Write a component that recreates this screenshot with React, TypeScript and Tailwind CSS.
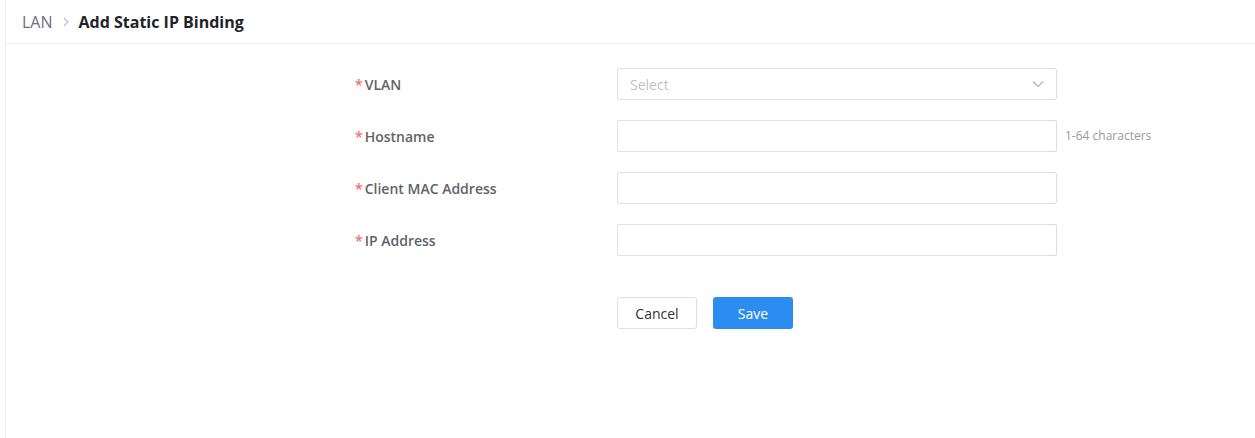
import React from "react";

const font = { fontFamily: '"Open Sans", "Noto Sans", Arial, sans-serif' };

function Label({ text }: { text: string }) {
  return (
    <div className="w-[262px] flex items-center text-[14px] font-semibold text-[#5f6368]">
      <span className="text-[#f56c6c] mr-[2px] text-[14px]">*</span>
      {text}
    </div>
  );
}

function Row({ label, children, hint }: { label: string; children: React.ReactNode; hint?: string }) {
  return (
    <div className="flex items-center h-[32px]">
      <Label text={label} />
      {children}
      {hint && <span className="ml-[8px] text-[12px] text-[#999]">{hint}</span>}
    </div>
  );
}

function TextBox() {
  return <div className="w-[440px] h-[32px] border border-[#dcdfe6] rounded-[2px] bg-white" />;
}

export default function App() {
  return (
    <div className="w-[1255px] h-[438px] bg-white pl-[5px]" style={font}>
      <div className="h-full border-l border-[#ebeef5] flex flex-col">
        <div className="h-[44px] border-b border-[#f0f0f0] flex items-center pl-[16px] pt-[1px]">
          <span className="text-[16px] text-[#6b7079]">LAN</span>
          <svg className="mx-[9px]" width="8" height="10" viewBox="0 0 8 10">
            <path d="M2 1l4 4-4 4" fill="none" stroke="#b8bcc4" strokeWidth="1.1" />
          </svg>
          <span className="text-[16px] font-bold text-[#1f2329]">Add Static IP Binding</span>
        </div>
        <div className="flex flex-col pl-[349px] pt-[24px]">
          <div className="flex flex-col gap-[20px]">
            <Row label="VLAN">
              <div className="w-[440px] h-[32px] border border-[#dcdfe6] rounded-[2px] bg-white flex items-center justify-between px-[12px]">
                <span className="text-[14px] text-[#bfc2c8]">Select</span>
                <svg width="12" height="8" viewBox="0 0 12 8">
                  <path d="M1 1.5l5 5 5-5" fill="none" stroke="#a8b0c0" strokeWidth="1.1" />
                </svg>
              </div>
            </Row>
            <Row label="Hostname" hint="1-64 characters">
              <TextBox />
            </Row>
            <Row label="Client MAC Address">
              <TextBox />
            </Row>
            <Row label="IP Address">
              <TextBox />
            </Row>
          </div>
          <div className="flex gap-[16px] pl-[262px] mt-[41px]">
            <button className="w-[80px] h-[32px] border border-[#dcdfe6] rounded-[3px] bg-white text-[14px] text-[#303133]">
              Cancel
            </button>
            <button className="w-[80px] h-[32px] rounded-[3px] bg-[#2d8cf0] text-[14px] text-white">
              Save
            </button>
          </div>
        </div>
      </div>
    </div>
  );
}
